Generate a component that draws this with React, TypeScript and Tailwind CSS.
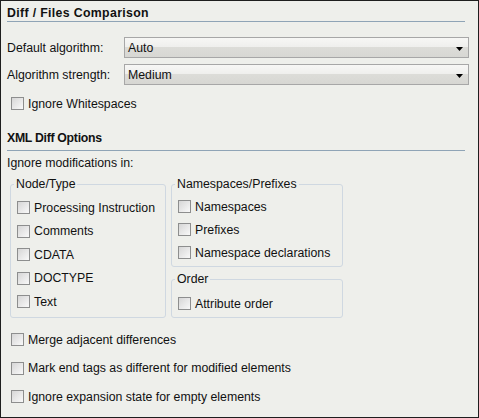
import React from "react";

function CheckBox() {
  return (
    <span className="block h-[13px] w-[13px] shrink-0 border border-[#8d8e8e] bg-[linear-gradient(135deg,#d6d6d6,#f9f9f9)]" />
  );
}

function Check({ label }: { label: string }) {
  return (
    <div className="flex h-[13px] items-center gap-[4px]">
      <CheckBox />
      <span className="whitespace-nowrap">{label}</span>
    </div>
  );
}

function Combo({ value }: { value: string }) {
  return (
    <div className="flex h-[21px] w-[345px] items-center border border-[#a7a7a7] bg-[linear-gradient(to_bottom,#f7f7f5_0%,#efefed_46%,#dcdcd8_50%,#d7d7d3_100%)] pl-[3px] pr-[5px]">
      <span className="flex-1">{value}</span>
      <svg width="7" height="4" viewBox="0 0 7 4" className="mt-[3px]">
        <polygon points="0,0 7,0 3.5,4" fill="#000" />
      </svg>
    </div>
  );
}

function Group({ title, className, children }: { title: string; className?: string; children: React.ReactNode }) {
  return (
    <fieldset className={`rounded-[3px] border border-[#cfd8e1] ${className ?? ""}`}>
      <legend className="-ml-[3px] px-[2px] leading-[16px]">{title}</legend>
      {children}
    </fieldset>
  );
}

export default function App() {
  return (
    <div className="h-[418px] w-[479px] overflow-hidden border border-[#1e1e1e] bg-[#eeefeb] font-['Liberation_Sans',Arial,sans-serif] text-[12.3px] leading-[16px] text-[#111]">
      {/* Diff / Files */}
      <div className="ml-[6px] mr-[13px] mt-[4px] border-b border-[#8fa4b6] font-bold tracking-[0.35px]">
        Diff / Files Comparison
      </div>

      <div className="ml-[6px] mt-[15px] flex items-center">
        <span className="w-[117px]">Default algorithm:</span>
        <Combo value="Auto" />
      </div>
      <div className="ml-[6px] mt-[6px] flex items-center">
        <span className="w-[117px]">Algorithm strength:</span>
        <Combo value="Medium" />
      </div>

      <div className="ml-[10px] mt-[12px]">
        <Check label="Ignore Whitespaces" />
      </div>

      {/* XML Diff */}
      <div className="ml-[6px] mr-[13px] mt-[20px] border-b border-[#8fa4b6] pb-[4px] font-bold tracking-[-0.3px]">
        XML Diff Options
      </div>
      <div className="ml-[6px] mt-[4px]">Ignore modifications in:</div>

      <div className="ml-[9px] mt-[5px] flex gap-[5px]">
        <Group title="Node/Type" className="w-[156px] pb-[7px] pl-[6px] pt-[9px]">
          <div className="flex flex-col gap-[10.6px]">
            <Check label="Processing Instruction" />
            <Check label="Comments" />
            <Check label="CDATA" />
            <Check label="DOCTYPE" />
            <Check label="Text" />
          </div>
        </Group>
        <div className="flex w-[172px] flex-col gap-[4px]">
          <Group title="Namespaces/Prefixes" className="pb-[7px] pl-[6px] pt-[8px]">
            <div className="flex flex-col gap-[10px]">
              <Check label="Namespaces" />
              <Check label="Prefixes" />
              <Check label="Namespace declarations" />
            </div>
          </Group>
          <Group title="Order" className="flex-1 pb-[7px] pl-[6px] pt-[10px]">
            <Check label="Attribute order" />
          </Group>
        </div>
      </div>

      <div className="ml-[10px] mt-[15px] flex flex-col gap-[15.5px]">
        <Check label="Merge adjacent differences" />
        <Check label="Mark end tags as different for modified elements" />
        <Check label="Ignore expansion state for empty elements" />
      </div>
    </div>
  );
}
